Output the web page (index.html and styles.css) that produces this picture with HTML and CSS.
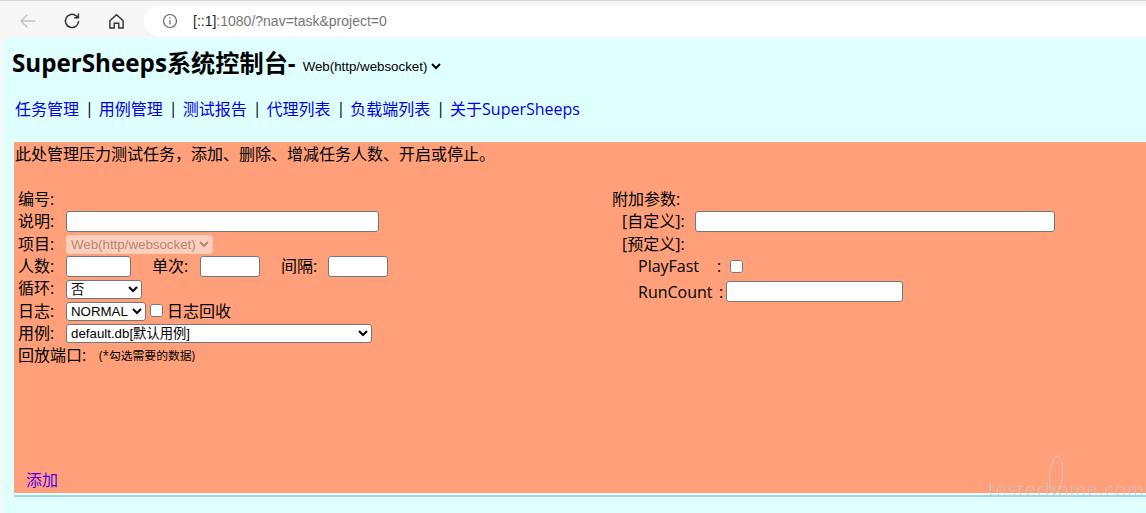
FILE: index.html
```html
<!DOCTYPE html>
<html lang="zh-CN">
<head>
    <meta charset="UTF-8">
    <title>SuperSheeps系统控制台</title>
    <link rel="stylesheet" href="styles.css">
</head>
<body>
    <div class="barra">
        <svg class="icono atras" viewBox="0 0 18 18"><path d="M16.5 9H2M8.5 2.5 2 9l6.5 6.5"/></svg>
        <svg class="icono recargar" viewBox="0 0 18 18"><path d="M15.6 9A6.6 6.6 0 1 1 13.4 4L15.2 5.6M15.4 1.6v4.2h-4.2"/></svg>
        <svg class="icono casa" viewBox="0 0 18 18"><path d="M2 8.2 9 1.9l7 6.3v7.6h-4.6v-5H6.6v5H2z"/></svg>
        <div class="direccion">
            <svg class="icono info" viewBox="0 0 16 16"><circle cx="8" cy="8" r="6.5"/><path d="M8 7v4.6M8 4.2v1.4"/></svg>
            <span class="url"><b>[::1]</b>:1080/?nav=task&amp;project=0</span>
        </div>
    </div>

    <div class="pagina">
        <div class="cabecera">
            <h1>SuperSheeps系统控制台-</h1>
            <select class="sel-proyecto"><option>Web(http/websocket)</option></select>
        </div>
        <div class="menu">
            <a href="#">任务管理</a><span class="sep">|</span>
            <a href="#">用例管理</a><span class="sep">|</span>
            <a href="#">测试报告</a><span class="sep">|</span>
            <a href="#">代理列表</a><span class="sep">|</span>
            <a href="#">负载端列表</a><span class="sep">|</span>
            <a href="#">关于SuperSheeps</a>
        </div>

        <div class="panel">
            <p class="aviso">此处管理压力测试任务，添加、删除、增减任务人数、开启或停止。</p>
            <div class="columnas">
                <div class="col-izq">
                    <div class="fila"><span class="etq">编号:</span></div>
                    <div class="fila"><span class="etq">说明:</span><input class="in-desc" type="text"></div>
                    <div class="fila"><span class="etq">项目:</span><select class="sel-off" disabled><option>Web(http/websocket)</option></select></div>
                    <div class="fila">
                        <span class="etq">人数:</span><input class="in-users" type="text">
                        <span class="etq-b">单次:</span><input class="in-num" type="text">
                        <span class="etq-c">间隔:</span><input class="in-num" type="text">
                    </div>
                    <div class="fila"><span class="etq">循环:</span><select class="sel-loop"><option>否</option></select></div>
                    <div class="fila">
                        <span class="etq">日志:</span><select class="sel-log"><option>NORMAL</option></select>
                        <input class="chk" type="checkbox"><span>日志回收</span>
                    </div>
                    <div class="fila"><span class="etq">用例:</span><select class="sel-case"><option>default.db[默认用例]</option></select></div>
                    <div class="fila"><span class="etq-puerto">回放端口:</span><small class="nota">(*勾选需要的数据)</small></div>
                </div>
                <div class="col-der">
                    <div class="fila"><span>附加参数:</span></div>
                    <div class="fila sub"><span class="etq-d">[自定义]:</span><input class="in-extra" type="text"></div>
                    <div class="fila sub"><span>[预定义]:</span></div>
                    <div class="fila sub2 fila-fast"><span class="etq-e">PlayFast</span><span>:</span><input class="chk-b" type="checkbox"></div>
                    <div class="fila sub2 fila-run"><span class="etq-f">RunCount</span><span>:</span><input class="in-run" type="text"></div>
                </div>
            </div>
            <a class="anadir" href="#">添加</a>
        </div>
        <div class="linea"></div>
    </div>
    <div class="marca">tester<span class="marca-h">h</span>ome.com</div>
</body>
</html>
```

FILE: styles.css
```css
html, body {
    margin: 0;
    padding: 0;
    height: 513px;
    overflow: hidden;
}

body {
    background-color: #f7f7f7;
    font-family: "Open Sans", "Noto Sans CJK SC", sans-serif;
    font-size: 16px;
    color: #000;
    position: relative;
}

.barra {
    height: 38px;
    display: flex;
    align-items: center;
    box-sizing: border-box;
    padding: 3px 0 0 19px;
    border-top: 1px solid #d8d8d8;
}

.icono {
    fill: none;
    stroke: #333;
    stroke-width: 1.5;
    flex: none;
}

.atras {
    width: 18px;
    height: 18px;
    stroke: #c4c4c4;
}

.recargar {
    width: 18px;
    height: 18px;
    margin-left: 26px;
}

.casa {
    width: 17px;
    height: 17px;
    margin-left: 27px;
}

.direccion {
    flex: 1;
    height: 30px;
    margin-left: 19px;
    background: #fff;
    border-radius: 15px 0 0 15px;
    display: flex;
    align-items: center;
    padding-left: 18px;
}

.info {
    width: 16px;
    height: 16px;
    stroke: #666;
    stroke-width: 1.2;
}

.url {
    margin-left: 15px;
    font-family: "Liberation Sans", sans-serif;
    font-size: 14px;
    color: #777;
}

.url b {
    font-weight: normal;
    color: #222;
}

.pagina {
    margin-left: 3px;
    height: 475px;
    background-color: #e0ffff;
    border-top-left-radius: 8px;
    padding-left: 9px;
    box-sizing: border-box;
    overflow: hidden;
}

.cabecera {
    display: flex;
    align-items: center;
    height: 50px;
}

h1 {
    margin: 0;
    font-size: 24.2px;
    font-weight: bold;
    line-height: 50px;
}

.sel-proyecto {
    margin: 7px 0 0 3px;
    border: none;
    background: transparent;
    padding: 0;
    font-family: "Liberation Sans", "Noto Sans CJK SC", sans-serif;
    font-size: 13.3px;
    color: #000;
}

.menu {
    height: 54px;
    padding: 0 0 14px 3px;
    display: flex;
    align-items: center;
    box-sizing: border-box;
    font-size: 16px;
}

.menu a {
    color: #0000ee;
    text-decoration: none;
}

.sep {
    margin: 0 5px 0 6px;
}

.panel {
    margin-left: 2px;
    height: 351px;
    background-color: #ffa07a;
    position: relative;
    padding-left: 4px;
    box-sizing: border-box;
}

.aviso {
    margin: 0 0 0 -3px;
    height: 45px;
    line-height: 25px;
    font-size: 16px;
}

.columnas {
    display: flex;
}

.col-izq {
    width: 594px;
    flex: none;
}

.fila {
    height: 22.3px;
    display: flex;
    align-items: center;
    font-size: 16px;
    white-space: nowrap;
}

.fila input[type=text], .fila select {
    box-sizing: border-box;
    font-family: "Liberation Sans", "Noto Sans CJK SC", sans-serif;
    font-size: 13.3px;
    background-color: #fff;
    border-radius: 3px;
    padding: 0;
    margin: 2px 0 0;
    color: #000;
}

.fila input[type=text] {
    height: 21px;
    border: 1px solid #767676;
}

.fila select {
    border: 1px solid #767676;
    height: 19px;
    margin-top: 4px;
}

.etq {
    width: 48px;
    flex: none;
}

.etq-b {
    width: 48px;
    margin-left: 21px;
    flex: none;
}

.etq-c {
    width: 47px;
    margin-left: 21px;
    flex: none;
}

.etq-puerto {
    width: 81px;
    flex: none;
}

.in-desc {
    width: 313px;
}

.fila .sel-off {
    width: 147px;
    opacity: 0.5;
    color: #6d6d6d;
    background-color: #ffffff;
    border-color: #ffffff;
}

.in-users {
    width: 65px;
}

.in-num {
    width: 60px;
}

.sel-loop {
    width: 76px;
}

.sel-log {
    width: 80px;
}

.chk {
    margin: 2px 4px 0 4px;
    width: 13px;
    height: 13px;
}

.sel-case {
    width: 306px;
}

.nota {
    font-size: 11.8px;
}

.sub {
    padding-left: 10px;
}

.sub2 {
    padding-left: 26px;
}

.fila-fast {
    height: 25px;
}

.fila-run {
    height: 27px;
}

.etq-d {
    width: 73px;
    flex: none;
}

.in-extra {
    width: 360px;
}

.etq-e {
    width: 79px;
    flex: none;
}

.etq-f {
    width: 81px;
    flex: none;
}

.chk-b {
    margin: 1px 0 0 9px;
    width: 13px;
    height: 13px;
}

.fila input.in-run {
    width: 177px;
    margin: -2px 0 0 3px;
}

.anadir {
    position: absolute;
    left: 12px;
    bottom: 2px;
    color: #5500ee;
    text-decoration: none;
    font-size: 16px;
}

.linea {
    height: 2px;
    margin: 2px 0 0 2px;
    background-color: #a3d3e0;
}

.marca {
    position: absolute;
    left: 988px;
    top: 474px;
    font-family: "Lato", sans-serif;
    font-weight: 300;
    font-size: 20px;
    line-height: 28px;
    letter-spacing: 1.2px;
    color: rgba(200, 200, 200, 0.85);
    white-space: nowrap;
}

.marca-h {
    position: relative;
}

/* rizo alto de la h de la marca de agua */
.marca-h::before {
    content: "";
    position: absolute;
    left: 4px;
    top: -20px;
    width: 12px;
    height: 36px;
    border: 1.5px solid rgba(200, 200, 200, 0.85);
    border-radius: 50%;
    transform: rotate(6deg);
}
```
